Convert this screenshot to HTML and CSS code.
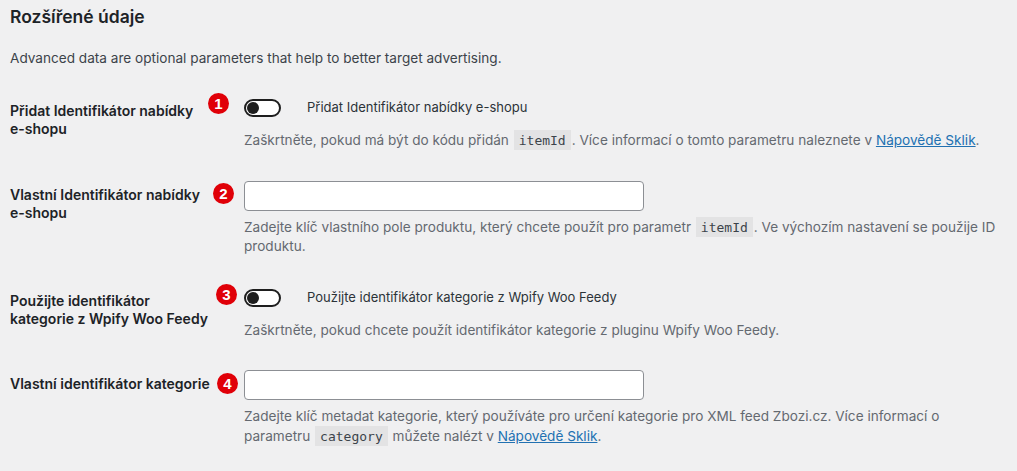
FILE: index.html
```html
<!DOCTYPE html>
<html lang="cs">
<head>
<meta charset="utf-8">
<title>Rozšířené údaje</title>
<link rel="stylesheet" href="styles.css">
</head>
<body>
<div class="wrap">
  <h2 class="title">Rozšířené údaje</h2>
  <p class="intro">Advanced data are optional parameters that help to better target advertising.</p>

  <div class="form-table">
    <div class="row">
      <div class="th">Přidat Identifikátor nabídky e-shopu</div>
      <div class="td">
        <label class="toggle-line">
          <span class="toggle"><span class="knob"></span></span>
          <span class="toggle-label">Přidat Identifikátor nabídky e-shopu</span>
        </label>
        <p class="description">Zaškrtněte, pokud má být do kódu přidán <code>itemId</code>. Více informací o tomto parametru naleznete v <a href="#">Nápovědě Sklik</a>.</p>
      </div>
      <span class="badge b1">1</span>
    </div>

    <div class="row">
      <div class="th">Vlastní Identifikátor nabídky e-shopu</div>
      <div class="td">
        <input class="text-input" type="text">
        <p class="description">Zadejte klíč vlastního pole produktu, který chcete použít pro parametr <code>itemId</code>. Ve výchozím nastavení se použije ID produktu.</p>
      </div>
      <span class="badge b2">2</span>
    </div>

    <div class="row">
      <div class="th">Použijte identifikátor kategorie z Wpify Woo Feedy</div>
      <div class="td">
        <label class="toggle-line">
          <span class="toggle"><span class="knob"></span></span>
          <span class="toggle-label">Použijte identifikátor kategorie z Wpify Woo Feedy</span>
        </label>
        <p class="description">Zaškrtněte, pokud chcete použít identifikátor kategorie z pluginu Wpify Woo Feedy.</p>
      </div>
      <span class="badge b3">3</span>
    </div>

    <div class="row">
      <div class="th">Vlastní identifikátor kategorie</div>
      <div class="td">
        <input class="text-input" type="text">
        <p class="description">Zadejte klíč metadat kategorie, který používáte pro určení kategorie pro XML feed Zbozi.cz. Více informací o parametru <code>category</code> můžete nalézt v <a href="#">Nápovědě Sklik</a>.</p>
      </div>
      <span class="badge b4">4</span>
    </div>
  </div>
</div>
</body>
</html>
```

FILE: styles.css
```css
html, body {
  margin: 0;
  padding: 0;
  background: #f0f0f1;
}

body {
  font-family: Inter, "Noto Sans", "Liberation Sans", sans-serif;
  font-size: 13.6px;
  color: #3c434a;
}

.wrap {
  padding: 6px 10px 0 10px;
}

.title {
  margin: 0;
  font-size: 17.5px;
  line-height: 22px;
  font-weight: 600;
  color: #1d2327;
}

.intro {
  margin: 20px 0 0 0;
  line-height: 20px;
  color: #3c434a;
}

.form-table {
  margin-top: 14px;
  display: flex;
  flex-direction: column;
}

.row {
  position: relative;
  display: flex;
}

.th {
  width: 200px;
  flex: 0 0 200px;
  padding: 20px 10px 20px 0;
  font-size: 14px;
  line-height: 18px;
  font-weight: 600;
  color: #1d2327;
}

.td {
  flex: 1;
  padding: 15px 0 15px 24px;
  line-height: 19.5px;
}

.toggle-line {
  display: flex;
  align-items: center;
  height: 22px;
  margin: 0 0 12px 0;
}

.toggle {
  position: relative;
  box-sizing: border-box;
  width: 37px;
  height: 18px;
  border: 2px solid #1e1e1e;
  border-radius: 9px;
  background: #fff;
  flex: 0 0 auto;
}

.knob {
  position: absolute;
  left: 1px;
  top: 1px;
  width: 12px;
  height: 12px;
  border-radius: 50%;
  background: #1e1e1e;
}

.toggle-label {
  margin-left: 26px;
  font-size: 13px;
  color: #2c3338;
}

.description {
  margin: 7px 0 0 0;
  color: #646970;
  line-height: 19.5px;
}

code {
  font-family: "DejaVu Sans Mono", "Liberation Mono", monospace;
  font-size: 13px;
  background: #e3e3e4;
  color: #3c434a;
  padding: 3px 5px 2px;
  margin: 0 1px;
}

a {
  color: #2271b1;
  text-decoration: underline;
}

.text-input {
  display: block;
  box-sizing: border-box;
  width: 400px;
  height: 30px;
  margin: 0;
  border: 1px solid #8c8f94;
  border-radius: 4px;
  background: #fff;
  padding: 0 8px;
  font: inherit;
}

.badge {
  position: absolute;
  width: 21px;
  height: 21px;
  border-radius: 50%;
  background: #e00008;
  color: #fff;
  font-family: "Liberation Sans", Arial, sans-serif;
  font-weight: 700;
  font-size: 15px;
  line-height: 21px;
  text-align: center;
}

.b1 { left: 198px; top: 11px; }
.b2 { left: 203px; top: 17px; }
.b3 { left: 206px; top: 12px; }
.b4 { left: 207px; top: 18px; }
```
